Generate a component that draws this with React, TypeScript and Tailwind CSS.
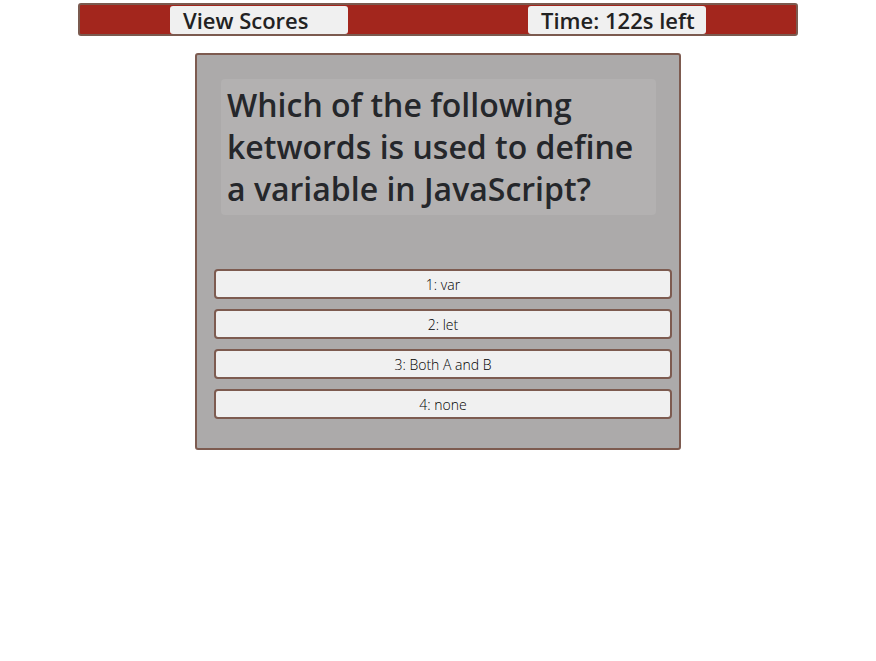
const answers = ["1: var", "2: let", "3: Both A and B", "4: none"];

export default function App() {
	return (
		<div className="min-h-[661px] bg-white text-[#222] font-['Open_Sans',sans-serif]">
			{/* Top bar */}
			<div className="mx-auto mt-[3px] flex h-[33px] w-[720px] items-end justify-around rounded-[3px] border-2 border-[#7b5a4f] bg-[#a3261d]">
				<button
					type="button"
					className="h-[28px] w-[178px] rounded-[3px] bg-[#f0f0f0] pl-[13px] text-left text-[22px] font-semibold leading-[28px] text-[#222]"
				>
					View Scores
				</button>
				<div className="h-[28px] w-[178px] rounded-[3px] bg-[#f0f0f0] pl-[13px] text-left text-[22px] font-semibold leading-[28px] text-[#222]">
					Time: 122s left
				</div>
			</div>

			{/* Question card */}
			<div className="mx-auto mt-[17px] w-[486px] rounded-[3px] border-2 border-[#7d5b50] bg-[#acaaaa] pl-[17px] pr-[7px] pt-[24px] pb-[29px]">
				<div className="ml-[7px] mr-[16px] rounded-[4px] bg-[#b3b1b1] px-[6px] pt-[5px] pb-[5px]">
					<h1 className="text-[32px] font-semibold leading-[42px] text-[#25272b]">
						Which of the following ketwords is used to define a variable in JavaScript?
					</h1>
				</div>

				<ul className="mt-[54px] flex flex-col gap-[10px]">
					{answers.map((a) => (
						<li key={a}>
							<button
								type="button"
								className="h-[30px] w-full rounded-[4px] border-2 border-[#7d5b50] bg-[#f0f0f0] text-center text-[14px] font-light text-black"
							>
								{a}
							</button>
						</li>
					))}
				</ul>
			</div>
		</div>
	);
}
